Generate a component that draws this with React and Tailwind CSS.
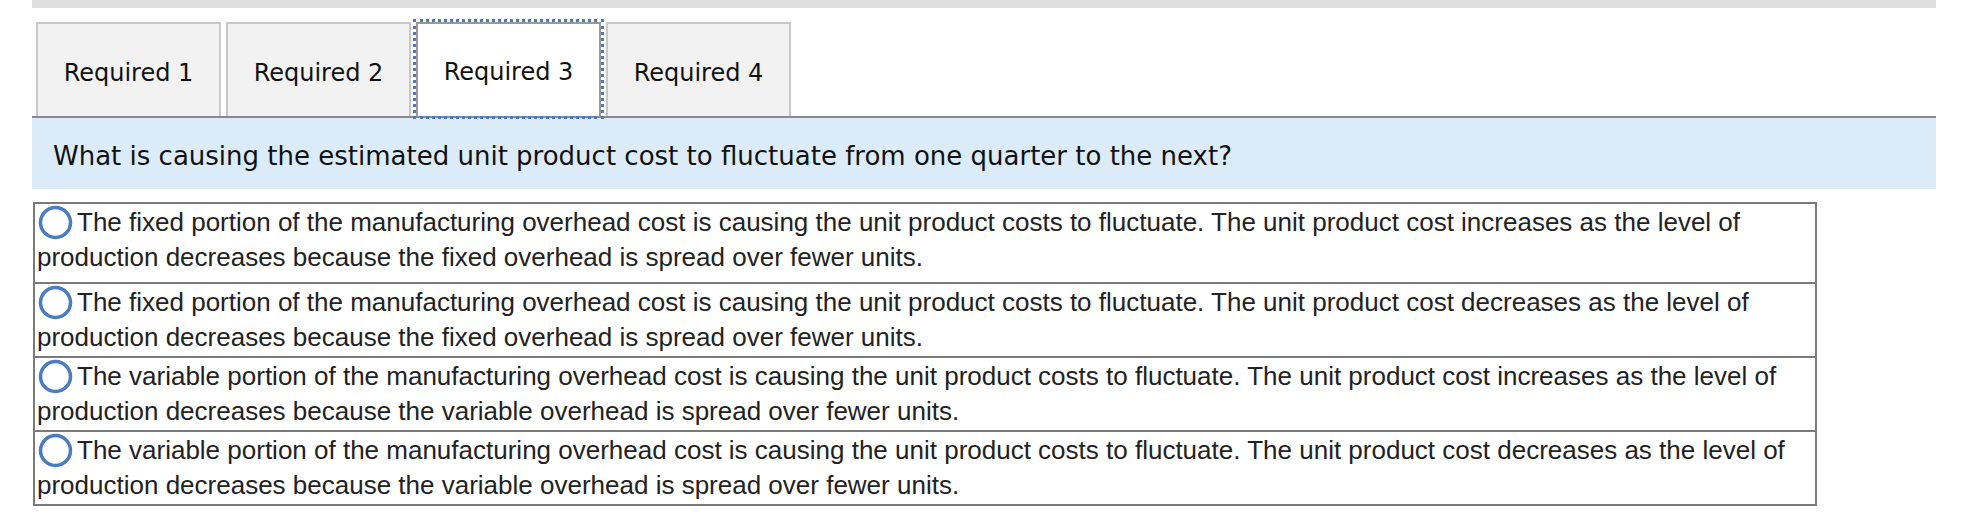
import React from 'react';

const tabs = ['Required 1', 'Required 2', 'Required 3', 'Required 4'];

const options = [
    'The fixed portion of the manufacturing overhead cost is causing the unit product costs to fluctuate. The unit product cost increases as the level of production decreases because the fixed overhead is spread over fewer units.',
    'The fixed portion of the manufacturing overhead cost is causing the unit product costs to fluctuate. The unit product cost decreases as the level of production decreases because the fixed overhead is spread over fewer units.',
    'The variable portion of the manufacturing overhead cost is causing the unit product costs to fluctuate. The unit product cost increases as the level of production decreases because the variable overhead is spread over fewer units.',
    'The variable portion of the manufacturing overhead cost is causing the unit product costs to fluctuate. The unit product cost decreases as the level of production decreases because the variable overhead is spread over fewer units.',
];

const Radio = () => (
    <svg width="40" height="35" viewBox="0 0 40 35" className="inline-block align-[-9px]">
        <circle cx="18.5" cy="17.5" r="15" fill="none" stroke="#4a7cbf" strokeWidth="3.5" />
    </svg>
);

const App = () => {
    const active = 2;

    return (
        <div className="bg-white w-[1970px] h-[524px]">
            <div className="ml-[32px] w-[1904px]">
                <div className="h-[8px] bg-[#dedede]" />

                {/* tab strip */}
                <div className="flex gap-[5px] pl-[4px] pt-[14px] border-b-2 border-[#8a8a8a] font-['DejaVu_Sans',sans-serif]">
                    {tabs.map((t, i) => (
                        <div
                            key={t}
                            className={
                                i === active
                                    ? 'relative w-[185px] h-[94px] -mb-[2px] pb-[2px] flex items-center justify-center bg-white border-2 border-b-0 border-[#999] outline-[3px] outline-dotted outline-[#4b78c0] text-[24px] text-[#111]'
                                    : 'w-[185px] h-[94px] flex items-center justify-center bg-[#f2f2f2] border-2 border-b-0 border-[#c8c8c8] text-[24px] text-[#111]'
                            }
                        >
                            <span className="pt-[5px]">{t}</span>
                        </div>
                    ))}
                </div>

                {/* question band */}
                <div className="h-[71px] bg-[#dcebf8] flex items-center pl-[21px] pt-[5px] font-['DejaVu_Sans',sans-serif] text-[26px] text-[#111]">
                    What is causing the estimated unit product cost to fluctuate from one quarter to the next?
                </div>

                {/* answer options */}
                <table className="mt-[13px] ml-[1px] w-[1784px] border-collapse border-2 border-[#7a7a7a] font-['Liberation_Sans',Arial,sans-serif] text-[26px] text-[#222]">
                    <tbody>
                        {options.map((o, i) => (
                            <tr key={i} className="border-2 border-[#7a7a7a]">
                                <td className={i === 0 ? 'pl-[2px] pr-[2px] pt-[1px] pb-[8px] leading-[34px]' : 'pl-[2px] pr-[2px] pt-[1px] pb-[2px] leading-[34px]'}>
                                    <Radio />
                                    {o}
                                </td>
                            </tr>
                        ))}
                    </tbody>
                </table>
            </div>
        </div>
    );
};

export default App;
